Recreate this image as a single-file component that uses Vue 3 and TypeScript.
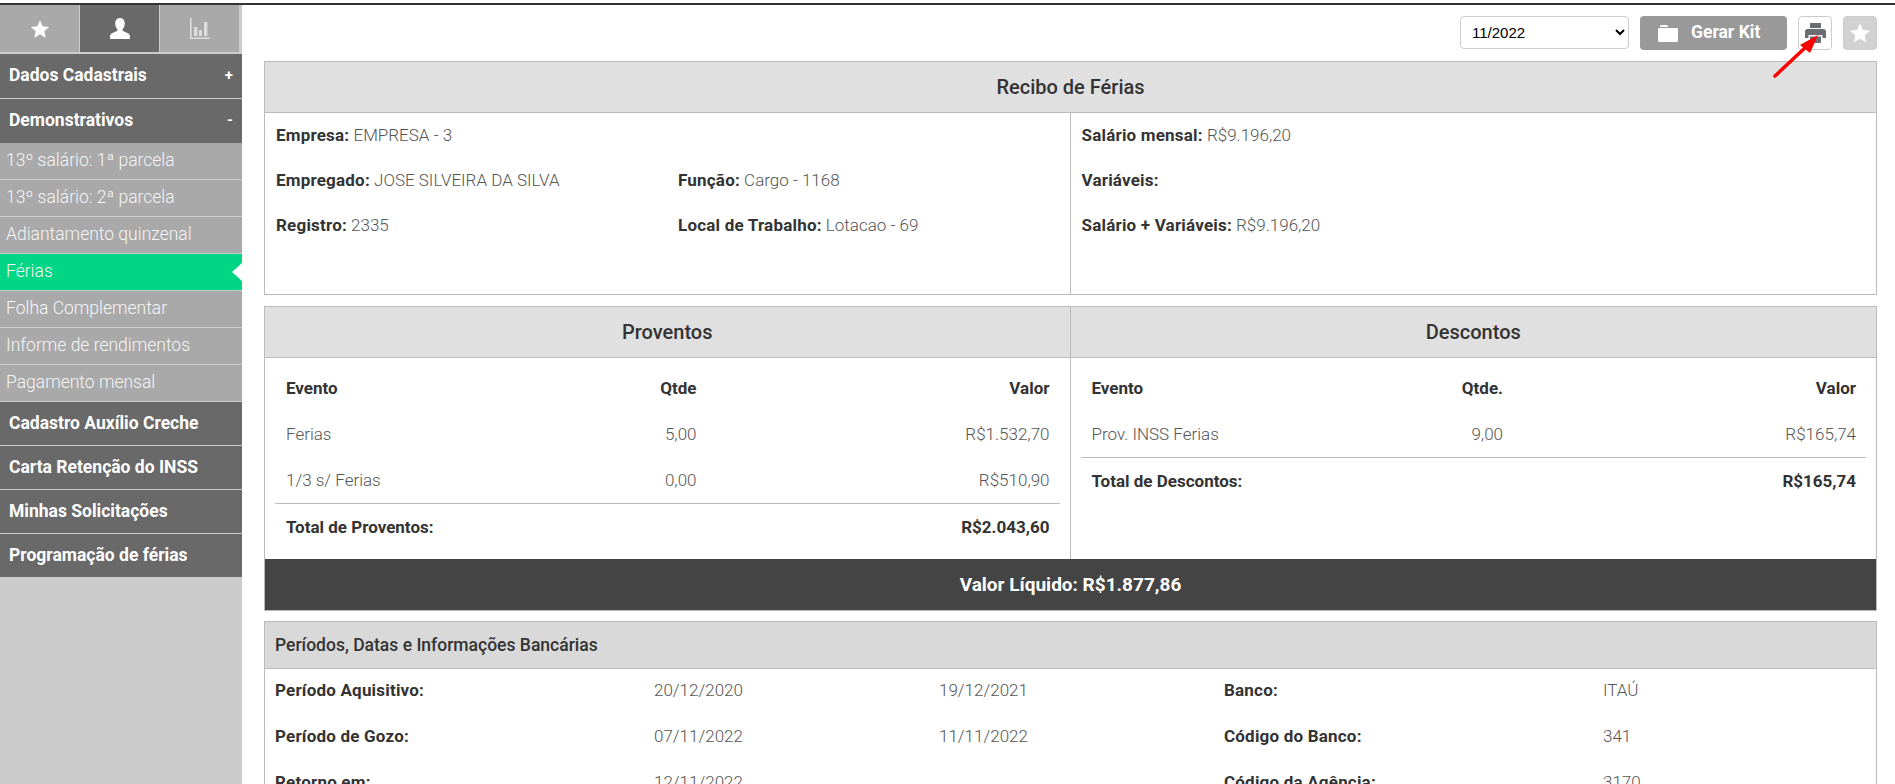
<template>
  <div class="page">
    <aside class="side">
      <div class="tabs">
        <div class="tab">
          <svg width="20" height="20" viewBox="0 0 24 24"><path fill="#fff" d="M12 1.500l3.200 7.200 7.800.8-5.900 5.200 1.700 7.700-6.800-4-6.800 4 1.700-7.700L1 9.500l7.800-.8z" /></svg>
        </div>
        <div class="tab active">
          <svg width="22" height="23" viewBox="0 0 22 23"><path fill="#fff" d="M11 1c3 0 4.800 2.300 4.800 5.400 0 2.200-.9 4.300-2 5.500-.5.600-.4 1.700.3 2.100 2.300 1.200 6.900 2.300 6.900 5.200V22H1v-2.800c0-2.900 4.600-4 6.900-5.200.7-.4.800-1.500.3-2.100-1.100-1.200-2-3.300-2-5.500C6.200 3.300 8 1 11 1z" /></svg>
        </div>
        <div class="tab">
          <svg width="20" height="21" viewBox="0 0 20 21" fill="#ddd"><path d="M0 0h1.600v19.400H20V21H0z" /><rect x="4" y="9" width="3.400" height="9" /><rect x="9" y="12" width="3" height="6" /><rect x="14" y="4" width="3.400" height="14" /></svg>
        </div>
      </div>
      <nav class="menu">
        <template v-for="m in menu" :key="m.label">
          <div class="head" :class="m.cls">
            <span>{{ m.label }}</span>
            <span v-if="m.sign" class="sign">{{ m.sign }}</span>
          </div>
          <div v-for="s in m.subs" :key="s" class="sub" :class="{ on: s === 'Férias' }">{{ s }}</div>
        </template>
      </nav>
    </aside>

    <main class="main">
      <div class="toolbar">
        <select class="period">
          <option>11/2022</option>
        </select>
        <button class="kit">
          <svg width="20" height="18" viewBox="0 0 20 18"><path fill="#fff" d="M0 5c0-.6.400-1 1-1h18c.6 0 1 .4 1 1v11.500c0 .8-.6 1.500-1.500 1.500h-17C.6 18 0 17.300 0 16.500zM2 2.500C2 1.700 2.700 1 3.500 1h5c.8 0 1.500.7 1.500 1.500V3H2z" /></svg>
          <span>Gerar Kit</span>
        </button>
        <button class="icon-btn print">
          <svg width="21" height="20" viewBox="0 0 21 20"><path fill="#6a6e72" d="M5 0h11v5H5zM2.500 6h16C19.900 6 21 7.100 21 8.500V15h-3.500v-3h-14v3H0V8.500C0 7.100 1.100 6 2.500 6zM5 13.500h11V20H5z" /></svg>
        </button>
        <button class="icon-btn fav">
          <svg width="22" height="22" viewBox="0 0 24 24"><path fill="#fff" d="M12 1.500l3.200 7.200 7.800.8-5.900 5.200 1.700 7.700-6.800-4-6.800 4 1.700-7.700L1 9.500l7.800-.8z" /></svg>
        </button>
        <svg class="arrow" width="46" height="46" viewBox="0 0 46 46"><path d="M2 44L34 14" stroke="#f00" stroke-width="3.500" stroke-linecap="round" fill="none" /><path d="M45 3L27 13l10 8z" fill="#f00" /></svg>
      </div>

      <section class="card">
        <h2 class="title">Recibo de Férias</h2>
        <div class="split info">
          <div class="pane left">
            <p><b>Empresa:</b> EMPRESA - 3</p>
            <div class="two">
              <p><b>Empregado:</b> JOSE SILVEIRA DA SILVA</p>
              <p><b>Função:</b> Cargo - 1168</p>
            </div>
            <div class="two">
              <p><b>Registro:</b> 2335</p>
              <p><b>Local de Trabalho:</b> Lotacao - 69</p>
            </div>
          </div>
          <div class="pane">
            <p><b>Salário mensal:</b> R$9.196,20</p>
            <p><b>Variáveis:</b></p>
            <p><b>Salário + Variáveis:</b> R$9.196,20</p>
          </div>
        </div>
      </section>

      <section class="card totals">
        <div class="split">
          <div class="col left">
            <h2 class="title">Proventos</h2>
            <div class="rows">
              <div class="row strong"><span>Evento</span><span class="q">Qtde</span><span class="v">Valor</span></div>
              <div v-for="r in proventos" :key="r[0]" class="row"><span>{{ r[0] }}</span><span class="q">{{ r[1] }}</span><span class="v">{{ r[2] }}</span></div>
              <div class="row strong sum"><span>Total de Proventos:</span><span class="q"></span><span class="v">R$2.043,60</span></div>
            </div>
          </div>
          <div class="col">
            <h2 class="title">Descontos</h2>
            <div class="rows">
              <div class="row strong"><span>Evento</span><span class="q">Qtde.</span><span class="v">Valor</span></div>
              <div v-for="r in descontos" :key="r[0]" class="row"><span>{{ r[0] }}</span><span class="q">{{ r[1] }}</span><span class="v">{{ r[2] }}</span></div>
              <div class="row strong sum"><span>Total de Descontos:</span><span class="q"></span><span class="v">R$165,74</span></div>
            </div>
          </div>
        </div>
        <div class="net">Valor Líquido: R$1.877,86</div>
      </section>

      <section class="card periods">
        <h3 class="subtitle">Períodos, Datas e Informações Bancárias</h3>
        <div v-for="r in periodos" :key="r[0]" class="prow">
          <b>{{ r[0] }}</b><span>{{ r[1] }}</span><span>{{ r[2] }}</span><b>{{ r[3] }}</b><span>{{ r[4] }}</span>
        </div>
      </section>
    </main>
  </div>
</template>

<script setup lang="ts">
type Item = { label: string; sign?: string; cls?: string; subs?: string[] };

const menu: Item[] = [
  { label: 'Dados Cadastrais', sign: '+', cls: 'first' },
  {
    label: 'Demonstrativos',
    sign: '-',
    cls: 'open',
    subs: [
      '13º salário: 1ª parcela',
      '13º salário: 2ª parcela',
      'Adiantamento quinzenal',
      'Férias',
      'Folha Complementar',
      'Informe de rendimentos',
      'Pagamento mensal',
    ],
  },
  { label: 'Cadastro Auxílio Creche' },
  { label: 'Carta Retenção do INSS' },
  { label: 'Minhas Solicitações' },
  { label: 'Programação de férias' },
];

const proventos = [
  ['Ferias', '5,00', 'R$1.532,70'],
  ['1/3 s/ Ferias', '0,00', 'R$510,90'],
];
const descontos = [['Prov. INSS Ferias', '9,00', 'R$165,74']];
const periodos = [
  ['Período Aquisitivo:', '20/12/2020', '19/12/2021', 'Banco:', 'ITAÚ'],
  ['Período de Gozo:', '07/11/2022', '11/11/2022', 'Código do Banco:', '341'],
  ['Retorno em:', '12/11/2022', '', 'Código da Agência:', '3170'],
];
</script>

<style>
html, body { margin: 0; height: 100%; overflow: hidden; background: #fff; }
</style>

<style scoped>
.page {
  display: flex;
  height: 784px;
  box-sizing: border-box;
  border-top: 2px solid #333;
  margin-top: 3px;
  font-family: Roboto, "Liberation Sans", sans-serif;
  font-size: 17px;
  color: #555;
  font-weight: 300;
  position: relative;
  overflow: hidden;
}
.side { width: 242px; flex-shrink: 0; background: #ccc; }
.tabs { display: flex; height: 47px; margin-bottom: 2px; }
.tab {
  width: 79px;
  margin-right: 1px;
  background: #a9a9a9;
  display: flex;
  align-items: center;
  justify-content: center;
}
.tab.active { background: #696969; }
.head {
  box-sizing: border-box;
  height: 44px;
  padding: 0 9px 1px;
  background: #696969;
  color: #fff;
  font-weight: 700;
  font-size: 17.5px;
  display: flex;
  align-items: center;
  justify-content: space-between;
  border-bottom: 1px solid #ccc;
}
.head.first { height: 45px; padding-bottom: 3px; }
.head.open { border-bottom-color: #696969; }
.sign { font-size: 15px; }
.sub {
  height: 36px;
  line-height: 35px;
  padding-left: 6px;
  background: #a9a9a9;
  color: #f5f5f5;
  font-size: 17.5px;
  border-bottom: 1px solid #ccc;
  position: relative;
}
.sub.on { background: #00d685; }
.sub.on::after {
  content: "";
  position: absolute;
  right: 0;
  top: 9px;
  border: 9px solid transparent;
  border-left-width: 0;
  border-right: 10px solid #fff;
}
.main { flex: 1; padding: 0 18px 0 22px; min-width: 0; }
.toolbar {
  height: 56px;
  display: flex;
  align-items: flex-start;
  justify-content: flex-end;
  padding-top: 11px;
  box-sizing: border-box;
  position: relative;
}
.period {
  width: 169px;
  height: 33px;
  margin-right: 11px;
  background: #fff;
  border: 1px solid #ccc;
  border-radius: 4px;
  font-family: "Liberation Sans", sans-serif;
  font-size: 15px;
  color: #000;
  padding-left: 7px;
}
.kit {
  width: 147px;
  height: 34px;
  margin-right: 11px;
  border: 0;
  border-radius: 4px;
  background: #999;
  color: #fff;
  font: 700 17.5px Roboto, sans-serif;
  display: flex;
  align-items: center;
  padding: 0 0 0 18px;
  gap: 13px;
}
.kit span { margin-top: -3px; }
.icon-btn {
  width: 34px;
  height: 34px;
  padding: 0;
  border: 1px solid #ccc;
  border-radius: 4px;
  display: flex;
  align-items: center;
  justify-content: center;
}
.print { background: #fff; margin-right: 11px; }
.fav { background: #d2d2d2; }
.arrow { position: absolute; right: 58px; top: 27px; }
.card { border: 1px solid #bbb; margin-bottom: 11px; }
.card.totals { margin-bottom: 10px; }
.title {
  margin: 0;
  height: 50px;
  line-height: 50px;
  text-align: center;
  background: #e0e0e0;
  border-bottom: 1px solid #bbb;
  font-size: 20px;
  font-weight: 500;
  color: #333;
}
.split { display: flex; }
.split > * { width: 50%; box-sizing: border-box; }
.left { border-right: 1px solid #bbb; }
.info { height: 181px; }
.pane { padding: 12px 10px 12px 11px; }
.pane p { margin: 0 0 24px; line-height: 21px; }
.two { display: grid; grid-template-columns: 402px 1fr; }
b { font-weight: 700; color: #333; letter-spacing: .2px; }
.rows { padding: 7px 10px 0; }
.row {
  display: grid;
  grid-template-columns: 1fr 100px 353px;
  height: 46px;
  align-items: center;
  padding: 0 10px 0 11px;
}
.strong { font-weight: 700; color: #333; }
.q, .v { text-align: right; }
.sum { border-top: 1px solid #bbb; padding-bottom: 2px; }
.col { height: 252px; }
.net {
  height: 51px;
  line-height: 51px;
  text-align: center;
  background: #444;
  color: #fff;
  font-size: 19px;
  font-weight: 700;
}
.subtitle {
  margin: 0 0 -2px;
  height: 46px;
  line-height: 46px;
  padding-left: 10px;
  background: #d9d9d9;
  border-bottom: 1px solid #bbb;
  font-size: 17.5px;
  font-weight: 500;
  color: #333;
}
.prow {
  display: grid;
  grid-template-columns: 379px 285px 285px 379px 1fr;
  height: 46px;
  padding: 0 10px;
  align-items: center;
}
</style>
